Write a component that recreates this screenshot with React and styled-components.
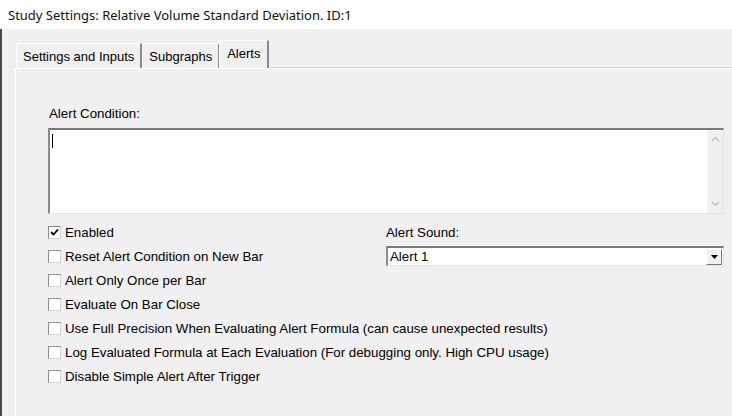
import React from 'react'
import styled, { createGlobalStyle } from 'styled-components'

const GlobalStyle = createGlobalStyle`
  html, body {
    margin: 0;
    padding: 0;
    width: 732px;
    height: 416px;
    overflow: hidden;
    background: #f0f0f0;
  }
  #root {
    height: 416px;
  }
`

const Window = styled.div`
  width: 732px;
  height: 416px;
  display: flex;
  flex-direction: column;
  font-family: "Liberation Sans", Arial, sans-serif;
  color: #000;
`

const TitleBar = styled.div`
  height: 29px;
  background: #fff;
  display: flex;
  align-items: center;
  padding-left: 8px;
  font-family: "Noto Sans", "Open Sans", sans-serif;
  font-size: 13px;
  color: #111;
  flex-shrink: 0;
`

const Body = styled.div`
  flex: 1;
  display: flex;
  flex-direction: column;
  border-left: 2px solid #4a4a4a;
  padding-left: 13px;
  padding-top: 11px;
  background: #f0f0f0;
`

const TabStrip = styled.div`
  display: flex;
  align-items: flex-end;
  height: 28px;
  padding-left: 1px;
`

const Tab = styled.div`
  height: ${p => (p.active ? '28px' : '25px')};
  box-sizing: border-box;
  padding: 0 ${p => (p.active ? '7px' : '6px')};
  display: flex;
  align-items: center;
  font-size: 13px;
  background: #f0f0f0;
  border-top: 1px solid #fff;
  border-left: 1px solid #fff;
  border-right: 2px solid #8a8a8a;
  margin-left: ${p => (p.active ? '-1px' : '0')};
  padding-bottom: ${p => (p.active ? '3px' : '0')};
  position: relative;
  z-index: ${p => (p.active ? 1 : 0)};
`

const Panel = styled.div`
  flex: 1;
  border-top: 1px solid #fff;
  border-left: 1px solid #fff;
  box-shadow: 0 -1px 0 #dadada;
  padding: 37px 8px 0 32px;
  display: flex;
  flex-direction: column;
  font-size: 13.3px;
`

const Label = styled.div`
  height: 15px;
  line-height: 15px;
  margin-bottom: 7px;
  padding-left: 1px;
`

const TextBox = styled.div`
  height: 86px;
  box-sizing: border-box;
  background: #fff;
  border-top: 2px solid #7a7a7a;
  border-left: 2px solid #8a8a8a;
  border-right: 1px solid #e3e3e3;
  border-bottom: 1px solid #e3e3e3;
  display: flex;
`

const Caret = styled.div`
  width: 1px;
  height: 14px;
  background: #000;
  margin: 4px 0 0 2px;
`

const TextArea = styled.div`
  flex: 1;
`

const ScrollBar = styled.div`
  width: 16px;
  background: #f0f0f0;
  display: flex;
  flex-direction: column;
  justify-content: space-between;
  align-items: center;
  padding: 6px 0 6px;
`

const Options = styled.div`
  display: grid;
  grid-template-columns: 338px 1fr;
  grid-auto-rows: 24px;
  margin-top: 6px;
`

const Option = styled.div`
  display: flex;
  align-items: center;
  gap: 4px;
  grid-column: ${p => (p.wide ? '1 / span 2' : 'auto')};
`

const Box = styled.div`
  width: 13px;
  height: 13px;
  box-sizing: border-box;
  background: #fff;
  border-top: 1px solid #8d8d8d;
  border-left: 1px solid #8d8d8d;
  border-right: 1px solid #d4d4d4;
  border-bottom: 1px solid #d4d4d4;
  display: flex;
  align-items: center;
  justify-content: center;
`

const SoundLabel = styled.div`
  display: flex;
  align-items: center;
`

const Select = styled.div`
  height: 20px;
  box-sizing: border-box;
  align-self: center;
  background: #fff;
  border-top: 2px solid #7a7a7a;
  border-left: 2px solid #8a8a8a;
  border-right: 1px solid #e3e3e3;
  border-bottom: 1px solid #e3e3e3;
  display: flex;
  align-items: center;
  justify-content: space-between;
  padding-left: 2px;
`

const DropButton = styled.div`
  width: 16px;
  height: 16px;
  box-sizing: border-box;
  background: #f0f0f0;
  border-top: 1px solid #fff;
  border-left: 1px solid #fff;
  border-right: 1px solid #7a7a7a;
  border-bottom: 1px solid #7a7a7a;
  display: flex;
  align-items: center;
  justify-content: center;
  margin-right: 1px;
`

const Check = () => (
  <svg width="9" height="9" viewBox="0 0 9 9">
    <path d="M1 4 L3.5 6.5 L8 1.5" fill="none" stroke="#000" strokeWidth="1.8" />
  </svg>
)

const Chevron = ({ up }) => (
  <svg width="9" height="6" viewBox="0 0 9 6">
    <path d={up ? 'M1 5 L4.5 1.5 L8 5' : 'M1 1 L4.5 4.5 L8 1'} fill="none" stroke="#b5b5b5" strokeWidth="1.2" />
  </svg>
)

const CheckOption = ({ label, checked, wide }) => (
  <Option wide={wide}>
    <Box>{checked && <Check />}</Box>
    <span>{label}</span>
  </Option>
)

const wideOptions = [
  'Alert Only Once per Bar',
  'Evaluate On Bar Close',
  'Use Full Precision When Evaluating Alert Formula (can cause unexpected results)',
  'Log Evaluated Formula at Each Evaluation (For debugging only. High CPU usage)',
  'Disable Simple Alert After Trigger',
]

export default function App() {
  return (
    <Window>
      <GlobalStyle />
      <TitleBar>Study Settings: Relative Volume Standard Deviation. ID:1</TitleBar>
      <Body>
        <TabStrip>
          <Tab>Settings and Inputs</Tab>
          <Tab>Subgraphs</Tab>
          <Tab active>Alerts</Tab>
        </TabStrip>
        <Panel>
          <Label>Alert Condition:</Label>
          <TextBox>
            <TextArea>
              <Caret />
            </TextArea>
            <ScrollBar>
              <Chevron up />
              <Chevron />
            </ScrollBar>
          </TextBox>
          <Options>
            <CheckOption label="Enabled" checked />
            <SoundLabel>Alert Sound:</SoundLabel>
            <CheckOption label="Reset Alert Condition on New Bar" />
            <Select>
              <span>Alert 1</span>
              <DropButton>
                <svg width="7" height="4" viewBox="0 0 7 4">
                  <path d="M0 0 L7 0 L3.5 4 Z" fill="#000" />
                </svg>
              </DropButton>
            </Select>
            {wideOptions.map(o => (
              <CheckOption key={o} label={o} wide />
            ))}
          </Options>
        </Panel>
      </Body>
    </Window>
  )
}
